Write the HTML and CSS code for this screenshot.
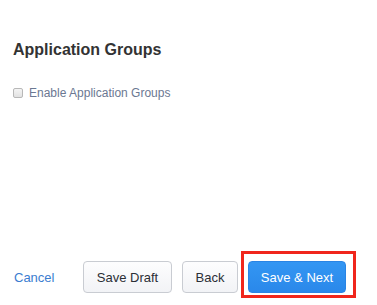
FILE: index.html
```html
<!DOCTYPE html>
<html lang="en">
<head>
    <meta charset="UTF-8">
    <meta name="viewport" content="width=device-width, initial-scale=1.0">
    <title>Application Groups</title>
    <link rel="stylesheet" href="styles.css">
</head>
<body>
    <div class="page">
        <h1>Application Groups</h1>

        <label class="check-row" for="enableGroups">
            <input type="checkbox" id="enableGroups">
            <span>Enable Application Groups</span>
        </label>

        <div class="footer">
            <a href="#" class="cancel">Cancel</a>
            <button class="btn btn-draft">Save Draft</button>
            <button class="btn btn-back">Back</button>
            <span class="highlight">
                <button class="btn btn-primary">Save &amp; Next</button>
            </span>
        </div>
    </div>
</body>
</html>
```

FILE: styles.css
```css
body {
    margin: 0;
    font-family: "Liberation Sans", Arial, sans-serif;
    color: #333;
    background: #fff;
}
.page {
    height: 305px;
    box-sizing: border-box;
    padding: 0 13px 12px 13px;
    display: flex;
    flex-direction: column;
}
h1 {
    margin: 40px 0 0 0;
    font-size: 16px;
    line-height: 20px;
    font-weight: bold;
    color: #333;
}
.check-row {
    display: flex;
    align-items: center;
    margin-top: 25px;
    font-size: 12px;
    line-height: 16px;
    color: #6b7892;
}
.check-row input {
    appearance: none;
    -webkit-appearance: none;
    width: 10px;
    height: 10px;
    margin: 0 6px 0 0;
    border: 1px solid #b8b8b8;
    border-radius: 2px;
    background: linear-gradient(#f4f4f4, #e2e2e2);
    box-sizing: border-box;
}
.footer {
    display: flex;
    align-items: center;
    gap: 10px;
    margin-top: auto;
}
.cancel {
    width: 40px;
    margin: 0 19px 0 1px;
    font-size: 13px;
    color: #3b7dd0;
    text-decoration: none;
}
.btn {
    height: 32px;
    padding: 0;
    font-family: inherit;
    font-size: 13px;
    color: #2b2f36;
    background: linear-gradient(#fdfdfe, #f2f3f6);
    border: 1px solid #c9ccd2;
    border-radius: 4px;
}
.btn-draft {
    width: 89px;
}
.btn-back {
    width: 56px;
}
.btn-primary {
    width: 98px;
    color: #fff;
    background: linear-gradient(#3396f3, #2a88ea);
    border-color: #2a84e4;
}
.highlight {
    position: relative;
    display: flex;
}
.highlight::after {
    content: "";
    position: absolute;
    top: -10px;
    left: -7px;
    right: -10px;
    bottom: -5px;
    border: 3px solid #f0261c;
}
```
